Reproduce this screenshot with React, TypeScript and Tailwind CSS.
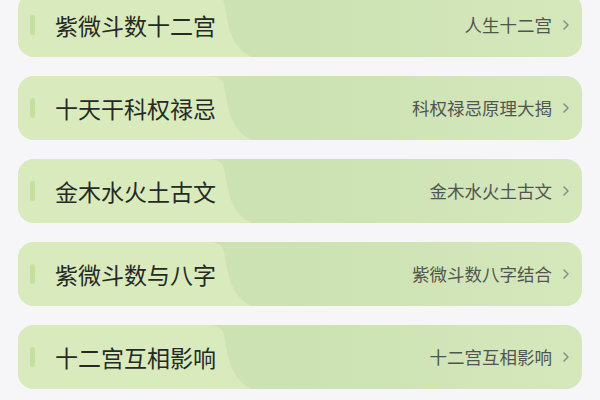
import React from "react";

const items = [
  { title: "紫微斗数十二宫", sub: "人生十二宫" },
  { title: "十天干科权禄忌", sub: "科权禄忌原理大揭" },
  { title: "金木水火土古文", sub: "金木水火土古文" },
  { title: "紫微斗数与八字", sub: "紫微斗数八字结合" },
  { title: "十二宫互相影响", sub: "十二宫互相影响" },
];

function Card({ title, sub }: { title: string; sub: string }) {
  return (
    <div className="relative h-[64px] overflow-hidden rounded-[16px] bg-gradient-to-r from-[#cfe3b4] via-[#cde2b2] to-[#d4e8bc]">
      <svg
        className="absolute left-0 top-0 h-[64px] w-[260px]"
        viewBox="0 0 260 64"
        preserveAspectRatio="none"
      >
        <path
          d="M0 0 H192 Q204 0 206 10 L209 26 Q214 56 234 64 H0 Z"
          fill="#d9ebbd"
        />
      </svg>
      <div className="relative flex h-full items-center pl-[12px] pr-[12px]">
        <div className="h-[20px] w-[5px] rounded-full bg-[#c4df9e]" />
        <div className="ml-[20px] text-[23px] font-normal leading-none text-[#262925]">{title}</div>
        <div className="ml-auto text-[17.5px] leading-none text-[#51554f]">{sub}</div>
        <svg className="ml-[10px] h-[12px] w-[8px]" viewBox="0 0 8 12">
          <path d="M2 2 L6 6 L2 10" fill="none" stroke="#8a8d88" strokeWidth="1.6" strokeLinecap="round" strokeLinejoin="round" />
        </svg>
      </div>
    </div>
  );
}

export default function App() {
  return (
    <div
      className="h-[400px] w-[600px] overflow-hidden bg-[#f6f6f8]"
      style={{ fontFamily: '"Noto Sans CJK SC", "Noto Sans", sans-serif' }}
    >
      <div className="-mt-[7px] flex flex-col gap-[19px] px-[18px]">
        {items.map((it) => (
          <Card key={it.title} title={it.title} sub={it.sub} />
        ))}
      </div>
    </div>
  );
}
